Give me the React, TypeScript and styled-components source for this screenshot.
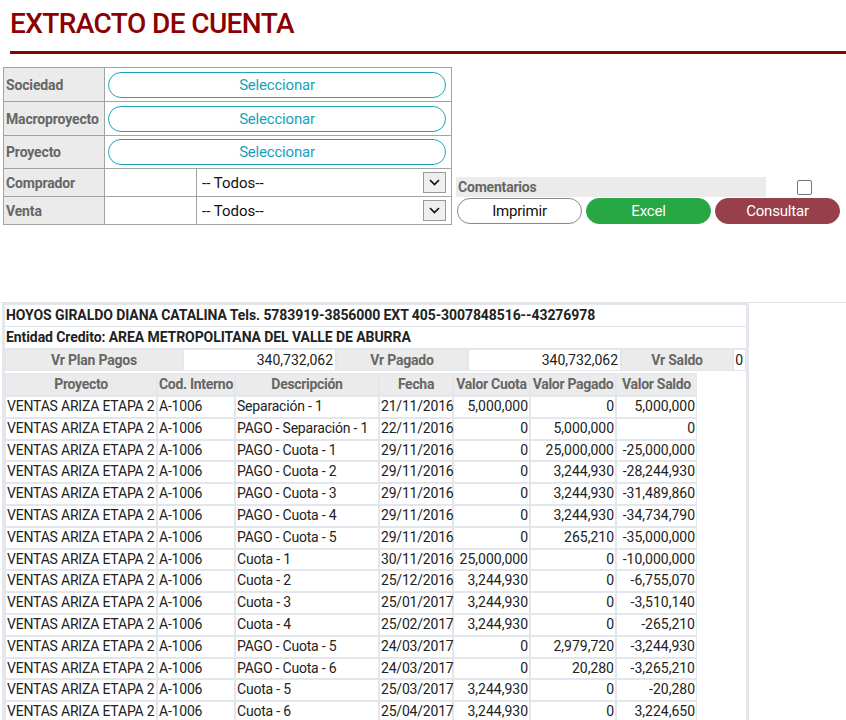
import styled, { createGlobalStyle } from "styled-components";

const GlobalStyle = createGlobalStyle`
  body {
    margin: 0;
    font-family: Roboto, "Liberation Sans", sans-serif;
    color: #222;
    background: #fff;
    letter-spacing: -0.2px;
  }
  button {
    letter-spacing: inherit;
  }
`;

const Header = styled.header`
  padding: 7px 0 0 10px;
`;

const Title = styled.h1`
  margin: 0;
  font-size: 28px;
  font-weight: 500;
  letter-spacing: -0.6px;
  line-height: 34px;
  color: #8b0000;
  padding-bottom: 10px;
  border-bottom: 3px solid #8b0000;
`;

const FilterArea = styled.div`
  display: flex;
  align-items: flex-end;
  margin-top: 13px;
  padding-left: 3px;
`;

const FilterTable = styled.table`
  border-collapse: collapse;
  border: 1px solid #a3a3a3;
  width: 449px;
  table-layout: fixed;
  td {
    border: 1px solid #a3a3a3;
    padding: 0;
  }
`;

const LabelCell = styled.td<{ $h: number }>`
  background: #ebebeb;
  color: #666;
  font-weight: 700;
  font-size: 14px;
  padding: 0 1px 0 2px !important;
  height: ${(p) => p.$h}px;
  white-space: nowrap;
  letter-spacing: -0.15px;
`;

const PickCell = styled.td`
  padding: 3px 5px 3px 3px !important;
`;

const PickButton = styled.button`
  display: block;
  width: 100%;
  height: 26px;
  border: 1px solid #1ca5ba;
  border-radius: 13px;
  background: #fff;
  color: #17a2b8;
  font-family: inherit;
  font-size: 15px;
  cursor: pointer;
`;

const FakeSelect = styled.div`
  display: flex;
  align-items: center;
  justify-content: space-between;
  padding: 0 5px 0 5px;
  font-size: 15px;
  color: #111;
  letter-spacing: 0;
`;

const ArrowBox = styled.span`
  display: flex;
  align-items: center;
  justify-content: center;
  width: 23px;
  height: 21px;
  box-sizing: border-box;
  border: 1px solid #999;
  background: #efefef;
`;

const SidePanel = styled.div`
  margin-left: 4px;
  width: 386px;
  margin-bottom: 1px;
`;

const CommentRow = styled.div`
  display: flex;
  align-items: center;
`;

const CommentLabel = styled.div`
  width: 310px;
  height: 20px;
  line-height: 20px;
  background: #ebebeb;
  color: #666;
  font-weight: 700;
  font-size: 14px;
  padding-left: 2px;
  box-sizing: border-box;
  letter-spacing: -0.2px;
`;

const CheckCell = styled.div`
  flex: 1;
  display: flex;
  justify-content: center;
`;

const Check = styled.input`
  appearance: none;
  margin: 0;
  width: 15px;
  height: 15px;
  border: 1px solid #767676;
  border-radius: 2px;
  background: #fff;
`;

const ButtonRow = styled.div`
  display: flex;
  gap: 4px;
  margin-top: 1px;
  padding-left: 1px;
`;

const ActionButton = styled.button<{ $kind: "plain" | "excel" | "go" }>`
  width: 125px;
  height: 26px;
  border-radius: 13px;
  font-family: inherit;
  font-size: 15px;
  cursor: pointer;
  border: 1px solid
    ${(p) => (p.$kind === "plain" ? "#8a8a8a" : p.$kind === "excel" ? "#28a745" : "#973f4a")};
  background: ${(p) => (p.$kind === "plain" ? "#fff" : p.$kind === "excel" ? "#28a745" : "#973f4a")};
  color: ${(p) => (p.$kind === "plain" ? "#111" : "#fff")};
`;

const ResultWrap = styled.section`
  margin-top: 77px;
  border-top: 1px solid #e3e6ea;
`;

const Panel = styled.div`
  width: 741px;
  margin-left: 2px;
  border: 3px solid #e3e6ea;
  border-top-width: 2px;
`;

const InfoRow = styled.div`
  height: 21px;
  line-height: 21px;
  font-size: 14px;
  font-weight: 700;
  padding-left: 1px;
  border-bottom: 1px solid #e3e6ea;
  white-space: nowrap;
  letter-spacing: -0.08px;
`;

const SummaryRow = styled.div`
  display: grid;
  grid-template-columns: 178px 153px 132px 153px 112px 1fr;
  height: 22px;
  font-size: 14px;
  & > div {
    box-sizing: border-box;
    line-height: 20px;
    border: 1px solid #e3e6ea;
  }
`;

const SumLabel = styled.div`
  background: #ebebeb;
  color: #666;
  font-weight: 700;
  text-align: center;
`;

const SumValue = styled.div`
  text-align: right;
  padding-right: 2px;
  letter-spacing: 0;
`;

const DataTable = styled.table`
  margin-top: 2px;
  border-collapse: separate;
  border-spacing: 0;
  table-layout: fixed;
  width: 692px;
  font-size: 14px;
  th,
  td {
    border: 1px solid #e3e6ea;
    padding: 0 1px;
    line-height: 19.8px;
    white-space: nowrap;
    overflow: visible;
  }
  th {
    background: #ebebeb;
    color: #666;
    font-weight: 700;
    text-align: center;
    line-height: 21px;
    letter-spacing: -0.3px;
    padding: 0;
  }
`;

const Cell = styled.td<{ $num?: boolean }>`
  text-align: ${(p) => (p.$num ? "right" : "left")};
  letter-spacing: ${(p) => (p.$num ? "0" : "-0.2px")};
`;

const Chevron = () => (
  <svg width="11" height="7" viewBox="0 0 11 7">
    <path d="M1 1 L5.5 5.5 L10 1" fill="none" stroke="#111" strokeWidth="1.7" />
  </svg>
);

const widths = [152, 78, 144, 74, 77, 86, 81];
const headers = ["Proyecto", "Cod. Interno", "Descripción", "Fecha", "Valor Cuota", "Valor Pagado", "Valor Saldo"];

const rows: [string, string, string, string, string][] = [
  ["Separación - 1", "21/11/2016", "5,000,000", "0", "5,000,000"],
  ["PAGO - Separación - 1", "22/11/2016", "0", "5,000,000", "0"],
  ["PAGO - Cuota - 1", "29/11/2016", "0", "25,000,000", "-25,000,000"],
  ["PAGO - Cuota - 2", "29/11/2016", "0", "3,244,930", "-28,244,930"],
  ["PAGO - Cuota - 3", "29/11/2016", "0", "3,244,930", "-31,489,860"],
  ["PAGO - Cuota - 4", "29/11/2016", "0", "3,244,930", "-34,734,790"],
  ["PAGO - Cuota - 5", "29/11/2016", "0", "265,210", "-35,000,000"],
  ["Cuota - 1", "30/11/2016", "25,000,000", "0", "-10,000,000"],
  ["Cuota - 2", "25/12/2016", "3,244,930", "0", "-6,755,070"],
  ["Cuota - 3", "25/01/2017", "3,244,930", "0", "-3,510,140"],
  ["Cuota - 4", "25/02/2017", "3,244,930", "0", "-265,210"],
  ["PAGO - Cuota - 5", "24/03/2017", "0", "2,979,720", "-3,244,930"],
  ["PAGO - Cuota - 6", "24/03/2017", "0", "20,280", "-3,265,210"],
  ["Cuota - 5", "25/03/2017", "3,244,930", "0", "-20,280"],
  ["Cuota - 6", "25/04/2017", "3,244,930", "0", "3,224,650"],
];

export default function App() {
  return (
    <>
      <GlobalStyle />
      <Header>
        <Title>EXTRACTO DE CUENTA</Title>
      </Header>

      <FilterArea>
        <FilterTable>
          <colgroup>
            <col style={{ width: 101 }} />
            <col style={{ width: 92 }} />
            <col />
          </colgroup>
          <tbody>
            {["Sociedad", "Macroproyecto", "Proyecto"].map((l, i) => (
              <tr key={l}>
                <LabelCell $h={i === 2 ? 32 : 33}>{l}</LabelCell>
                <PickCell colSpan={2}>
                  <PickButton>Seleccionar</PickButton>
                </PickCell>
              </tr>
            ))}
            {["Comprador", "Venta"].map((l) => (
              <tr key={l}>
                <LabelCell $h={27}>{l}</LabelCell>
                <td />
                <td>
                  <FakeSelect>
                    <span>-- Todos--</span>
                    <ArrowBox>
                      <Chevron />
                    </ArrowBox>
                  </FakeSelect>
                </td>
              </tr>
            ))}
          </tbody>
        </FilterTable>

        <SidePanel>
          <CommentRow>
            <CommentLabel>Comentarios</CommentLabel>
            <CheckCell>
              <Check type="checkbox" />
            </CheckCell>
          </CommentRow>
          <ButtonRow>
            <ActionButton $kind="plain">Imprimir</ActionButton>
            <ActionButton $kind="excel">Excel</ActionButton>
            <ActionButton $kind="go">Consultar</ActionButton>
          </ButtonRow>
        </SidePanel>
      </FilterArea>

      <ResultWrap>
        <Panel>
          <InfoRow>HOYOS GIRALDO DIANA CATALINA Tels. 5783919-3856000 EXT 405-3007848516--43276978</InfoRow>
          <InfoRow>Entidad Credito: AREA METROPOLITANA DEL VALLE DE ABURRA</InfoRow>
          <SummaryRow>
            <SumLabel>Vr Plan Pagos</SumLabel>
            <SumValue>340,732,062</SumValue>
            <SumLabel>Vr Pagado</SumLabel>
            <SumValue>340,732,062</SumValue>
            <SumLabel>Vr Saldo</SumLabel>
            <SumValue>0</SumValue>
          </SummaryRow>
          <DataTable>
            <colgroup>
              {widths.map((w, i) => (
                <col key={i} style={{ width: w }} />
              ))}
            </colgroup>
            <thead>
              <tr>
                {headers.map((h) => (
                  <th key={h}>{h}</th>
                ))}
              </tr>
            </thead>
            <tbody>
              {rows.map((r, i) => (
                <tr key={i}>
                  <Cell>VENTAS ARIZA ETAPA 2</Cell>
                  <Cell>A-1006</Cell>
                  <Cell>{r[0]}</Cell>
                  <Cell>{r[1]}</Cell>
                  <Cell $num>{r[2]}</Cell>
                  <Cell $num>{r[3]}</Cell>
                  <Cell $num>{r[4]}</Cell>
                </tr>
              ))}
            </tbody>
          </DataTable>
        </Panel>
      </ResultWrap>
    </>
  );
}
